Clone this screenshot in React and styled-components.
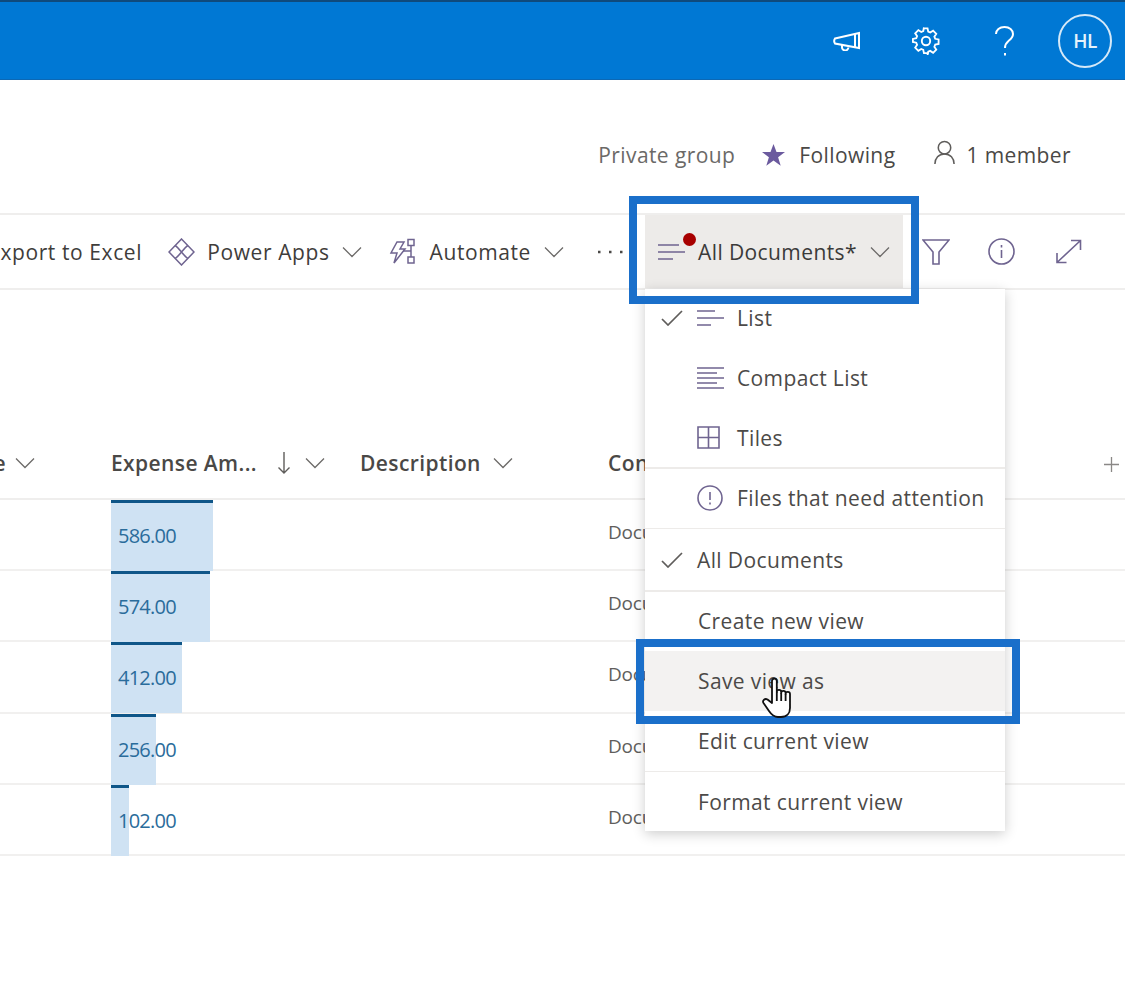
import React from "react";
import styled, { createGlobalStyle } from "styled-components";

const purple = "#6f6490";

const GlobalStyle = createGlobalStyle`
  html, body {
    margin: 0;
    padding: 0;
    background: #fff;
    font-family: "Open Sans", "Liberation Sans", sans-serif;
    color: #323130;
  }
  * { box-sizing: border-box; }
  svg { flex-shrink: 0; }
`;

const Page = styled.div`
  position: relative;
  width: 1125px;
  height: 991px;
  overflow: hidden;
  background: #fff;
`;

const TopBar = styled.header`
  height: 80px;
  background: #0078d4;
  border-top: 2px solid #0f4a7c;
  border-bottom: 1px solid #0c68b4;
  display: flex;
  align-items: center;
  justify-content: flex-end;
  padding-right: 13px;
  color: #fff;
`;

const TopIcon = styled.div`
  display: flex;
  align-items: center;
  justify-content: center;
  width: ${(props) => props.$w}px;
  margin-left: ${(props) => props.$left || 0}px;
`;

const Avatar = styled.div`
  width: 54px;
  height: 54px;
  margin-left: 41px;
  border: 2px solid #d5e9f8;
  border-radius: 50%;
  display: flex;
  align-items: center;
  justify-content: center;
  font-size: 19px;
  font-weight: 600;
  letter-spacing: -0.5px;
  color: #e6f2fb;
`;

const InfoRow = styled.div`
  height: 133px;
  display: flex;
  justify-content: flex-end;
  align-items: flex-start;
  padding: 60px 54px 0 0;
  font-size: 21px;
  line-height: 30px;
  letter-spacing: 0.4px;
`;

const InfoItem = styled.div`
  display: flex;
  align-items: center;
  gap: ${(props) => props.$gap || 0}px;
  margin-left: ${(props) => props.$left || 0}px;
  color: ${(props) => props.$color || "#4a4846"};
`;

const PersonIcon = styled.span`
  display: flex;
  margin-top: -6px;
`;

const CommandBar = styled.div`
  height: 77px;
  border-top: 2px solid #efeeed;
  border-bottom: 2px solid #efeeed;
  display: flex;
  justify-content: flex-end;
  align-items: center;
  padding-right: 43px;
  font-size: 21px;
  letter-spacing: 0.6px;
  overflow: hidden;
  white-space: nowrap;
`;

const Command = styled.div`
  display: flex;
  align-items: center;
  flex-shrink: 0;
  gap: ${(props) => props.$gap || 12}px;
  margin-right: ${(props) => props.$right || 0}px;
  color: #3f3d3b;
`;

const CommandIcon = styled.span`
  display: flex;
  margin-right: ${(props) => props.$right || 0}px;
`;

const ViewButton = styled.div`
  flex-shrink: 0;
  width: 258px;
  height: 75px;
  background: #edebe9;
  display: flex;
  align-items: center;
  padding-left: 13px;
  margin-right: 19px;
  letter-spacing: 0.4px;
  color: #3b3a39;
`;

const ListIconWrap = styled.div`
  position: relative;
  width: 40px;
  height: 24px;
`;

const RedDot = styled.span`
  position: absolute;
  left: 25px;
  top: -7px;
  width: 13px;
  height: 13px;
  border-radius: 50%;
  background: #a80000;
`;

const ViewChevron = styled.span`
  display: flex;
  margin-left: 13px;
`;

const BarIcon = styled.div`
  flex-shrink: 0;
  display: flex;
  justify-content: center;
  width: ${(props) => props.$w}px;
  margin-right: ${(props) => props.$right || 0}px;
`;

const Spacer = styled.div`
  height: 140px;
`;

const Table = styled.div`
  font-size: 21px;
`;

const HeaderRow = styled.div`
  height: 70px;
  padding-bottom: 2px;
  border-bottom: 2px solid #efeeed;
  display: grid;
  grid-template-columns: 111px 249px 248px 1fr;
  align-items: center;
  font-weight: 600;
  letter-spacing: 0.4px;
  color: #4a4846;
  white-space: nowrap;
`;

const HeaderCell = styled.div`
  display: flex;
  align-items: center;
  overflow: hidden;
  justify-content: ${(props) => (props.$clip ? "flex-end" : "flex-start")};
  padding-right: ${(props) => (props.$clip ? 76 : 0)}px;
  gap: ${(props) => props.$gap || 12}px;
`;

const HeaderLabel = styled.span`
  flex-shrink: 0;
`;

const SortArrow = styled.span`
  display: flex;
  margin: 0 2px 0 8px;
`;

const AddColumn = styled.div`
  position: absolute;
  left: 1104px;
  top: 457px;
  display: flex;
`;

const Row = styled.div`
  height: 71.2px;
  border-bottom: 2px solid #f1f0ef;
  display: grid;
  grid-template-columns: 111px 497px 1fr;
`;

const AmountCell = styled.div`
  position: relative;
  height: 71px;
  display: flex;
  align-items: center;
`;

const DataBar = styled.div`
  width: ${(props) => props.$width}px;
  height: 100%;
  background: #cfe2f3;
  border-top: 3px solid #0f5688;
`;

const Amount = styled.span`
  position: absolute;
  left: 7px;
  top: 21px;
  font-size: 20px;
  line-height: 30px;
  letter-spacing: -0.75px;
  color: #2a6c9b;
`;

const DocCell = styled.div`
  display: flex;
  align-items: center;
  height: 64px;
  font-size: 19px;
  letter-spacing: -0.2px;
  color: #605e5c;
`;

const Menu = styled.div`
  position: absolute;
  left: 645px;
  top: 289px;
  width: 360px;
  height: 542px;
  background: #fff;
  box-shadow: 0 3px 12px rgba(0, 0, 0, 0.2);
  font-size: 21px;
  letter-spacing: 0.38px;
  color: #4c4a48;
`;

const MenuItem = styled.div`
  height: ${(props) => props.$h || 60}px;
  display: flex;
  align-items: center;
  padding-left: ${(props) => (props.$icon ? 0 : 53)}px;
  background: ${(props) => (props.$active ? "#f3f2f1" : "transparent")};
`;

const MenuDivider = styled.div`
  height: 1.5px;
  background: #edebe9;
`;

const Check = styled.div`
  width: 52px;
  display: flex;
  justify-content: center;
  padding-left: 2px;
`;

const IconSlot = styled.div`
  width: 40px;
  display: flex;
  align-items: center;
`;

const Frame = styled.div`
  position: absolute;
  left: ${(props) => props.$x}px;
  top: ${(props) => props.$y}px;
  width: ${(props) => props.$w}px;
  height: ${(props) => props.$h}px;
  border: 8px solid #1a6fca;
  pointer-events: none;
`;

const Cursor = styled.svg`
  position: absolute;
  left: 762px;
  top: 677px;
`;

const Stroke = ({ w, h, box, color = purple, sw = 1.6, children }) => (
  <svg width={w} height={h} viewBox={box || `0 0 ${w} ${h}`} fill="none" stroke={color} strokeWidth={sw}>
    {children}
  </svg>
);

const Chevron = ({ size = 20 }) => (
  <Stroke w={size} h={12} box="0 0 20 12" color="#6d6b69" sw={1.3}>
    <path d="M1 1.5l9 9 9-9" />
  </Stroke>
);

const CheckMark = () => (
  <Stroke w={22} h={16} color="#5f5d5b" sw={1.7}>
    <path d="M1 9l6 6L21 1" />
  </Stroke>
);

const LinesIcon = () => (
  <Stroke w={27} h={16} sw={1.6}>
    <path d="M0 1h18M0 8h27M0 15h14" />
  </Stroke>
);

const rows = [
  { value: "586.00", width: 102 },
  { value: "574.00", width: 99 },
  { value: "412.00", width: 71 },
  { value: "256.00", width: 45 },
  { value: "102.00", width: 18 },
];

export default function App() {
  return (
    <Page>
      <GlobalStyle />
      <TopBar>
        <TopIcon $w={30}>
          <Stroke w={28} h={20} color="#fff" sw={2}>
            <path d="M2 7.5L26 2v15L2 12.5c-1-1.5-1-3.5 0-5z" />
            <path d="M9 14v2a3.2 3.2 0 0 0 6.400 .5" />
            <path d="M22 3v13.500" />
          </Stroke>
        </TopIcon>
        <TopIcon $w={28} $left={50}>
          <Stroke w={28} h={28} color="#fff" sw={1.9}>
            <circle cx="14" cy="14" r="4.200" />
            <path d="M11.600 1.600h4.800l.7 3.500 2.100.9 3-2 3.300 3.400-2 2.900.9 2.200 3.500.7v4.700l-3.500.7-.9 2.200 2 2.900-3.300 3.400-3-2-2.100.9-.7 3.500" transform="translate(-.2 -.2) scale(.96)" />
            <path d="M16.400 26.400h-4.800l-.7-3.500-2.100-.9-3 2-3.300-3.400 2-2.900-.9-2.200-3.500-.7V11.600l3.500-.7.9-2.200-2-2.900 3.300-3.400 3 2 2.100-.9.7-3.500" transform="translate(.8 .8) scale(.96)" />
          </Stroke>
        </TopIcon>
        <TopIcon $w={24} $left={53}>
          <Stroke w={22} h={30} color="#fff" sw={2}>
            <path d="M2 8c0-4 3.500-7 8.500-7S19 4 19 8c0 3.500-2 5-4.500 7-2.500 2-3.500 3.500-3.500 7" />
            <path d="M11 27v2.500" />
          </Stroke>
        </TopIcon>
        <Avatar>HL</Avatar>
      </TopBar>

      <InfoRow>
        <InfoItem $color="#6b6967">Private group</InfoItem>
        <InfoItem $left={27} $gap={14}>
          <svg width="23" height="22" viewBox="0 0 23 22" fill="#6b5a9e">
            <path d="M11.500 0l3 8h8.500l-6.900 5.200 2.600 8.600-7.200-5.200-7.200 5.200 2.600-8.600L0 8h8.500z" />
          </svg>
          Following
        </InfoItem>
        <InfoItem $left={38} $gap={10}>
          <PersonIcon>
            <Stroke w={23} h={25} color="#5f5d5b" sw={1.6} box="0 0 24 26">
              <circle cx="12" cy="8" r="6.500" />
              <path d="M2 25c0-6 4-10.500 10-10.500S22 19 22 25" />
            </Stroke>
          </PersonIcon>
          1 member
        </InfoItem>
      </InfoRow>

      <CommandBar>
        <Command $right={26}>Export to Excel</Command>
        <Command $right={26} $gap={12}>
          <Stroke w={27} h={28} sw={1.5}>
            <path d="M13.500 1L26 14 13.500 27 1 14z" />
            <path d="M7 7.500c4 2 9 11 13 13M20 7.500c-4 2-9 11-13 13" />
          </Stroke>
          Power Apps
          <Chevron />
        </Command>
        <Command $right={33} $gap={13}>
          <CommandIcon $right={2}>
            <Stroke w={27} h={28} sw={1.5}>
              <path d="M9 4h7l-4 7h5L6 25l3-10H3z" />
              <rect x="20" y="1.500" width="6" height="6" />
              <rect x="20" y="19" width="6" height="6" />
              <path d="M23 7.500V19M15 13h8" />
            </Stroke>
          </CommandIcon>
          Automate
          <Chevron />
        </Command>
        <Command $right={22}>
          <Stroke w={26} h={4} color="#4a4846" sw={2.4}>
            <path d="M1 2h2.500M12 2h2.500M23 2h2.500" />
          </Stroke>
        </Command>
        <ViewButton>
          <ListIconWrap>
            <Stroke w={27} h={20} sw={1.7}>
              <path d="M0 3h21M0 10h27M0 17h15" />
            </Stroke>
            <RedDot />
          </ListIconWrap>
          All Documents*
          <ViewChevron>
            <Chevron />
          </ViewChevron>
        </ViewButton>
        <BarIcon $w={28} $right={38}>
          <Stroke w={28} h={26} sw={1.6}>
            <path d="M1 1h26L17 13v12h-6V13z" />
          </Stroke>
        </BarIcon>
        <BarIcon $w={27} $right={40}>
          <Stroke w={27} h={27} sw={1.6}>
            <circle cx="13.500" cy="13.500" r="12.500" />
            <path d="M13.500 12v8M13.500 7v2.500" />
          </Stroke>
        </BarIcon>
        <BarIcon $w={27}>
          <Stroke w={27} h={25} sw={1.6}>
            <path d="M2 23.500L25.500 1.500M16 1.500h9.500V11M2 14v9.500h9.500" />
          </Stroke>
        </BarIcon>
      </CommandBar>

      <Spacer />

      <Table>
        <HeaderRow>
          <HeaderCell $clip $gap={9}>
            <HeaderLabel>Date</HeaderLabel>
            <Chevron />
          </HeaderCell>
          <HeaderCell>
            <HeaderLabel>Expense Am...</HeaderLabel>
            <SortArrow>
              <Stroke w={14} h={24} color="#5f5d5b" sw={1.4}>
                <path d="M7 1v21M1.500 16.500L7 22l5.500-5.500" />
              </Stroke>
            </SortArrow>
            <Chevron />
          </HeaderCell>
          <HeaderCell>
            <HeaderLabel>Description</HeaderLabel>
            <Chevron />
          </HeaderCell>
          <HeaderCell>
            <HeaderLabel>Content Type</HeaderLabel>
          </HeaderCell>
        </HeaderRow>
        {rows.map((row) => (
          <Row key={row.value}>
            <div />
            <AmountCell>
              <DataBar $width={row.width} />
              <Amount>{row.value}</Amount>
            </AmountCell>
            <DocCell>Document</DocCell>
          </Row>
        ))}
      </Table>

      <AddColumn>
        <Stroke w={15} h={15} color="#8a8886" sw={1.3}>
          <path d="M7.500 0v15M0 7.500h15" />
        </Stroke>
      </AddColumn>

      <Menu>
        <MenuItem $icon $h={58}>
          <Check><CheckMark /></Check>
          <IconSlot><LinesIcon /></IconSlot>
          List
        </MenuItem>
        <MenuItem $icon $h={61}>
          <Check />
          <IconSlot>
            <Stroke w={27} h={22} sw={1.5}>
              <path d="M0 1h27M0 6h20M0 11h27M0 16h20M0 21h27" />
            </Stroke>
          </IconSlot>
          Compact List
        </MenuItem>
        <MenuItem $icon $h={59}>
          <Check />
          <IconSlot>
            <Stroke w={23} h={23} sw={1.6}>
              <path d="M1 1h21v21H1zM11.500 1v21M1 11.500h21" />
            </Stroke>
          </IconSlot>
          Tiles
        </MenuItem>
        <MenuDivider />
        <MenuItem $icon $h={59}>
          <Check />
          <IconSlot>
            <Stroke w={26} h={26} sw={1.6}>
              <circle cx="13" cy="13" r="12" />
              <path d="M13 7v8M13 17.500v2" />
            </Stroke>
          </IconSlot>
          Files that need attention
        </MenuItem>
        <MenuDivider />
        <MenuItem $icon $h={61}>
          <Check><CheckMark /></Check>
          All Documents
        </MenuItem>
        <MenuDivider />
        <MenuItem $h={59}>Create new view</MenuItem>
        <MenuItem $h={60} $active>Save view as</MenuItem>
        <MenuItem $h={60}>Edit current view</MenuItem>
        <MenuDivider />
        <MenuItem $h={59}>Format current view</MenuItem>
      </Menu>

      <Frame $x={629} $y={196} $w={290} $h={108} />
      <Frame $x={636} $y={639} $w={384} $h={85} />

      <Cursor width="32" height="41" viewBox="0 0 32 41" fill="#fff" stroke="#111" strokeWidth="1.800" strokeLinejoin="round">
        <path d="M10 4a2.400 2.400 0 0 1 4.800 0V15a2.200 2.200 0 0 1 4.400 0v1a2.200 2.200 0 0 1 4.400 0v1a2.200 2.200 0 0 1 4.400 0V31c0 5-3 9-9 9h-3c-4 0-7-3-9-6L1.500 26c-1.500-2.500 1.500-5 4-3.500L10 26z" />
        <path d="M14.800 15v9M19.200 16v8M23.600 17v7" fill="none" />
      </Cursor>
    </Page>
  );
}
